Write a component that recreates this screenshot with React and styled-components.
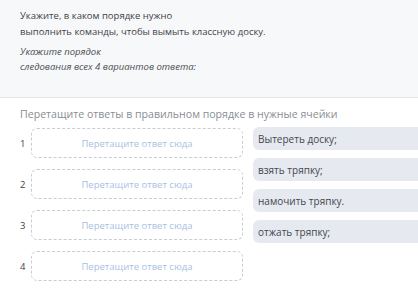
import React from "react";
import styled, { createGlobalStyle } from "styled-components";

const GlobalStyle = createGlobalStyle`
  html, body {
    margin: 0;
    padding: 0;
    background: #ffffff;
    overflow: hidden;
  }
  body {
    font-family: "Open Sans", "Noto Sans", sans-serif;
  }
`;

const Page = styled.div`
  width: 418px;
  height: 300px;
  overflow: hidden;
`;

const Header = styled.div`
  box-sizing: border-box;
  height: 98px;
  padding: 8px 20px 0;
  background: #f7f8fa;
  border-bottom: 1px solid #e4e6ea;
`;

const Question = styled.p`
  margin: 0;
  font-size: 9.5px;
  line-height: 16px;
  color: #3f4247;
`;

const Hint = styled.p`
  margin: 4px 0 0;
  font-size: 9.5px;
  line-height: 15px;
  font-style: italic;
  color: #4a4d52;
`;

const Section = styled.div`
  padding: 8px 0 0 20px;
`;

const Title = styled.div`
  font-size: 10.6px;
  line-height: 16px;
  color: #8a8d92;
`;

const Board = styled.div`
  display: flex;
  align-items: flex-start;
  margin-top: 6px;
`;

const Slots = styled.div`
  display: flex;
  flex-direction: column;
  flex-shrink: 0;
  gap: 11px;
`;

const SlotRow = styled.div`
  display: flex;
  align-items: center;
`;

const SlotNumber = styled.span`
  width: 11px;
  font-size: 9.5px;
  color: #3f4247;
`;

const DropZone = styled.div`
  box-sizing: border-box;
  width: 212px;
  height: 30px;
  display: flex;
  align-items: center;
  justify-content: center;
  border: 1px dashed #c9ccd1;
  border-radius: 6px;
  font-size: 9.5px;
  color: #a9bfdf;
`;

const Answers = styled.div`
  display: flex;
  flex-direction: column;
  flex-shrink: 0;
  gap: 8px;
  margin: -1px 0 0 10px;
  width: 240px;
`;

const Chip = styled.div`
  box-sizing: border-box;
  height: 23px;
  display: flex;
  align-items: center;
  padding-left: 5px;
  background: #e6e9f0;
  border-radius: 6px 0 0 6px;
  font-size: 10px;
  color: #44474c;
`;

const answers = ["Вытереть доску;", "взять тряпку;", "намочить тряпку.", "отжать тряпку;"];

export default function App() {
  return (
    <Page>
      <GlobalStyle />
      <Header>
        <Question>
          Укажите, в каком порядке нужно
          <br />
          выполнить команды, чтобы вымыть классную доску.
        </Question>
        <Hint>
          Укажите порядок
          <br />
          следования всех 4 вариантов ответа:
        </Hint>
      </Header>
      <Section>
        <Title>Перетащите ответы в правильном порядке в нужные ячейки</Title>
        <Board>
          <Slots>
            {[1, 2, 3, 4].map((n) => (
              <SlotRow key={n}>
                <SlotNumber>{n}</SlotNumber>
                <DropZone>Перетащите ответ сюда</DropZone>
              </SlotRow>
            ))}
          </Slots>
          <Answers>
            {answers.map((a) => (
              <Chip key={a}>{a}</Chip>
            ))}
          </Answers>
        </Board>
      </Section>
    </Page>
  );
}
